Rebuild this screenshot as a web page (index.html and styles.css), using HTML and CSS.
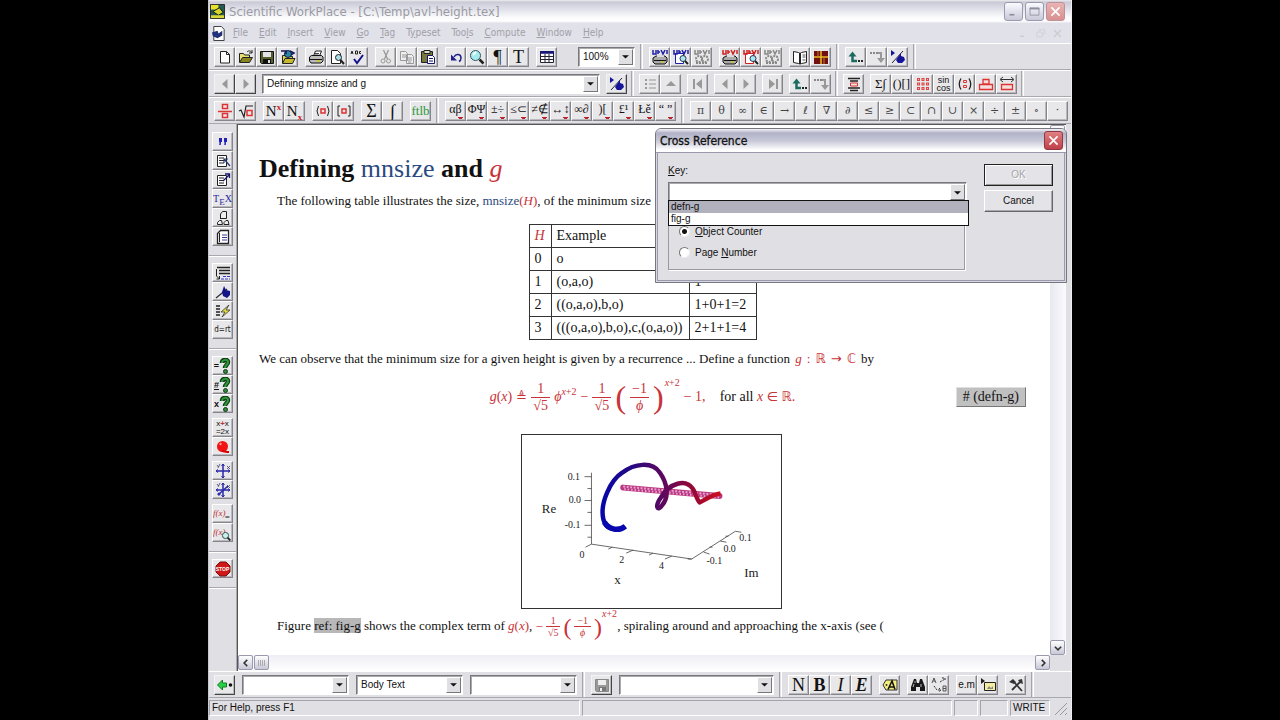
FILE: index.html
```html
<!DOCTYPE html>
<html lang="en">
<head>
<meta charset="utf-8">
<title>Scientific WorkPlace</title>
<link rel="stylesheet" href="styles.css">
</head>
<body>
<svg class="defs" aria-hidden="true">
  <defs>
    <symbol id="new" viewBox="0 0 16 16"><path d="M3.5 2.500h6l3 3v8.500h-9z" fill="#fff" stroke="#222"/><path d="M9.500 2.500v3h3" fill="none" stroke="#222"/></symbol>
    <symbol id="open" viewBox="0 0 16 16"><path d="M1.500 13V4.500h4l1 1.500h5v2" fill="#e8e070" stroke="#222"/><path d="M1.500 13.500l3-5h10l-3 5z" fill="#8a8420" stroke="#222"/><path d="M9 3c2-2 4-1 5 1m0-3v3h-3" fill="none" stroke="#222"/></symbol>
    <symbol id="save" viewBox="0 0 16 16"><path d="M1.500 2.500h13v12h-12l-1-1z" fill="#56602a" stroke="#111"/><path d="M4 3h8v5H4z" fill="#e4e4e8"/><path d="M4 10h8v4H4z" fill="#111"/><path d="M9 11h2v3H9z" fill="#ddd"/></symbol>
    <symbol id="savegray" viewBox="0 0 16 16"><path d="M1.500 2.500h13v12h-12l-1-1z" fill="#999" stroke="#888"/><path d="M4 3h8v5H4z" fill="#eee"/><path d="M5 10h7v4H5z" fill="#777"/><path d="M6 11h2v3H6z" fill="#eee"/></symbol>
    <symbol id="texopen" viewBox="0 0 16 16"><path d="M2.500 14V6.500h4l1 1h5V9" fill="#e8d840" stroke="#222"/><path d="M2.500 14.500l2.500-5h10l-2.500 5z" fill="#c8b830" stroke="#222"/><circle cx="8" cy="5" r="3.500" fill="#2a8a9a" stroke="#14145a"/><path d="M1 2h5v3M10 2l4 2-3 2" fill="none" stroke="#14145a" stroke-width="1.500"/></symbol>
    <symbol id="print" viewBox="0 0 16 16"><path d="M5.500 7l2-5h6l-2 5" fill="#fff" stroke="#222"/><path d="M7 4.500h4M6.500 6h4" stroke="#444"/><path d="M1.500 8l2-1.500h10l1.500 1.500v4l-2 2h-10l-1.500-2z" fill="#bbb" stroke="#111"/><path d="M2 10.500h12" stroke="#111"/><path d="M9 12h3" stroke="#cc0" stroke-width="1.500"/></symbol>
    <symbol id="preview" viewBox="0 0 16 16"><path d="M2.500 1.500h6l3 3v10h-9z" fill="#fff" stroke="#222"/><circle cx="9.500" cy="8.500" r="3" fill="#a8e0e8" stroke="#222"/><path d="M11.500 11l3.500 4" stroke="#222" stroke-width="2"/></symbol>
    <symbol id="check" viewBox="0 0 16 16"><path d="M1 5l1-3 1 3M5.500 5V2h2v3zM11 2.500H9.500v2H11" fill="none" stroke="#222"/><path d="M4 10l3 4 6-8" fill="none" stroke="#15158a" stroke-width="2"/></symbol>
    <symbol id="cut" viewBox="0 0 16 16"><path d="M5.500 1l4 9M10.500 1l-4 9" stroke="#999" stroke-width="1.300"/><circle cx="5" cy="12" r="2" fill="none" stroke="#999"/><circle cx="10.500" cy="12" r="2" fill="none" stroke="#999"/></symbol>
    <symbol id="copy" viewBox="0 0 16 16"><path d="M1.500 2.500h5l2 2v7h-7zM7.500 5.500h5l2 2v7h-7z" fill="#eee" stroke="#999"/><path d="M3 6h4M3 8h4M9 9h4M9 11h4M9 13h3" stroke="#999"/></symbol>
    <symbol id="paste" viewBox="0 0 16 16"><path d="M1.500 2.500h11v11h-11z" fill="#77783c" stroke="#222"/><path d="M4 1.500h6v3H4z" fill="#ddc" stroke="#222"/><path d="M7.500 6.500h5l2 2v6h-7z" fill="#fff" stroke="#15156a"/><path d="M9 9.500h4M9 12h4" stroke="#15156a"/></symbol>
    <symbol id="undo" viewBox="0 0 16 16"><path d="M6 8c2-4 7-3 7 1 0 2-1 3-2 3.500" fill="none" stroke="#20208a" stroke-width="1.500"/><path d="M3 5.500v6h6z" fill="#20208a"/></symbol>
    <symbol id="mag" viewBox="0 0 16 16"><circle cx="6.500" cy="6.500" r="5" fill="#a6ecec" stroke="#356"/><path d="M4 6l3-3" stroke="#fff" stroke-width="2"/><path d="M10.500 10.500l4 4" stroke="#222" stroke-width="2.500"/></symbol>
    <symbol id="table" viewBox="0 0 16 16"><path d="M1.500 2.500h13v11h-13z" fill="#fff" stroke="#223"/><path d="M1 3.500h14" stroke="#15157a" stroke-width="2.500"/><path d="M2 7.500h12M2 10.500h12M6 5v9M10 5v9" stroke="#223"/></symbol>
    <symbol id="dvi" viewBox="0 0 16 16"><path d="M1 1v4h3V1M6 1v4M9 1l2 4 2-4M15 1v4M6 3h2" fill="none" stroke="currentColor" stroke-width="1.500"/></symbol>
    <symbol id="dviprint" viewBox="0 0 16 16"><path d="M1 9l3-2h9l2 2v4l-2 2H3l-2-2z" fill="#aaa" stroke="#111"/><path d="M2 11.500h12" stroke="#111"/><path d="M9 13h3" stroke="#dd0"/><path d="M5 5h7v3H5z" fill="#ddd"/><use href="#dvi"/></symbol>
    <symbol id="dviview" viewBox="0 0 16 16"><path d="M2.500 4.500h8v10h-8z" fill="#fff" stroke="currentColor"/><circle cx="10" cy="9.500" r="3" fill="#a8e8ee" stroke="#335"/><path d="M12 12l3 3" stroke="#222" stroke-width="2"/><use href="#dvi"/></symbol>
    <symbol id="dvigear" viewBox="0 0 16 16"><circle cx="5" cy="10" r="3" fill="none" stroke="#888" stroke-width="2" stroke-dasharray="2 1"/><circle cx="11" cy="10" r="3" fill="none" stroke="#888" stroke-width="2" stroke-dasharray="2 1"/><path d="M2 14h12" stroke="#888" stroke-width="2" stroke-dasharray="2 1"/><use href="#dvi"/></symbol>
    <symbol id="book" viewBox="0 0 16 16"><path d="M1.500 2.500l5 1 1.500 1 1.500-1 5-1v11l-5 1L8 15l-1.500-.5-5-1z" fill="#fff" stroke="#222"/><path d="M8 4v11" stroke="#222" stroke-width="2"/><path d="M10.500 6h3M10.500 8h3M10.500 11h3" stroke="#555"/></symbol>
    <symbol id="window" viewBox="0 0 16 16"><path d="M1 2h14v13H1z" fill="#701010"/><path d="M8 2v13M1 8h14" stroke="#e8c020" stroke-width="1.500"/><path d="M5 2v6M11 8v7" stroke="#c08020"/></symbol>
    <symbol id="back" viewBox="0 0 16 16"><path d="M4.500 5v7H9" fill="none" stroke="currentColor" stroke-width="2.500"/><path d="M.500 7.500l4-5 4 5z" fill="currentColor"/><path d="M10 12h2M13 12h2" stroke="#222" stroke-width="2"/></symbol>
    <symbol id="fwd" viewBox="0 0 16 16"><path d="M1 4h2M4 4h2M7 4h2" stroke="#888" stroke-width="2"/><path d="M9 4h3v6" fill="none" stroke="#999" stroke-width="2"/><path d="M8 9h8l-4 5z" fill="#999"/></symbol>
    <symbol id="marker" viewBox="0 0 16 16"><path d="M1 1v6l4-3z" fill="#15159a"/><path d="M2 14l11-12" stroke="#223"/><path d="M11 4v3l3 1 1 3-3 3H8l-2-3 2-3z" fill="#15159a"/></symbol>
    <symbol id="tagtool" viewBox="0 0 16 16"><path d="M1 14l11-9" stroke="#333" stroke-width="1.300"/><path d="M9 2l2 4 4 1v4l-3 3-4-2-1-4z" fill="#15158a"/></symbol>
    <symbol id="left" viewBox="0 0 16 16"><path d="M10.500 3v10L5 8z" fill="#999"/></symbol>
    <symbol id="right" viewBox="0 0 16 16"><path d="M5.500 3v10L11 8z" fill="#999"/></symbol>
    <symbol id="up" viewBox="0 0 16 16"><path d="M3 10h10L8 5z" fill="#999"/></symbol>
    <symbol id="first" viewBox="0 0 16 16"><path d="M4 3v10" stroke="#999" stroke-width="2"/><path d="M12 3v10L6 8z" fill="#999"/></symbol>
    <symbol id="last" viewBox="0 0 16 16"><path d="M12 3v10" stroke="#999" stroke-width="2"/><path d="M4 3v10l6-5z" fill="#999"/></symbol>
    <symbol id="list" viewBox="0 0 16 16"><path d="M3 4h2M3 8h2M3 12h2" stroke="#999" stroke-width="2"/><path d="M7 4h7M7 8h7M7 12h7" stroke="#999"/></symbol>
    <symbol id="display" viewBox="0 0 16 16"><path d="M2 2.500h12M4 5h8M2 12h12M4 14.500h8" stroke="#222" stroke-width="1.300"/><path d="M4.500 7h7v3h-7z" fill="none" stroke="#d33"/></symbol>
    <symbol id="matrix" viewBox="0 0 16 16"><path d="M2 3.500h12M2 8h12M2 12.500h12" stroke="#d44" stroke-width="3" stroke-dasharray="3 1.500"/><path d="M3 3.500h10M3 8h10M3 12.500h10" stroke="#fbb" stroke-width="1" stroke-dasharray="1 3.500"/></symbol>
    <symbol id="binom" viewBox="0 0 16 16"><path d="M4 2.500q-3.500 5.500 0 11M12 2.500q3.500 5.500 0 11" fill="none" stroke="#222" stroke-width="1.300"/><path d="M6.500 4.500h3v2h-3zM6.500 9.500h3v2h-3z" fill="none" stroke="#d33"/></symbol>
    <symbol id="label" viewBox="0 0 16 16"><path d="M1.500 8.500h13v5h-13zM5 3.500h6v4.500h-6z" fill="#f4dede" stroke="#d33" stroke-width="1.300"/></symbol>
    <symbol id="decor" viewBox="0 0 16 16"><path d="M2 3.500h12M4 1L1 3.500 4 6M12 1l3 2.500L12 6" fill="none" stroke="#333"/><path d="M2.500 8.500h11v5h-11z" fill="#f4dede" stroke="#d33" stroke-width="1.300"/></symbol>
    <symbol id="frac" viewBox="0 0 16 16"><path d="M1 8.500h14" stroke="#d33" stroke-width="1.500"/><path d="M5.500 1.500h5v4h-5zM5.500 10.500h5v4h-5z" fill="none" stroke="#d33" stroke-width="1.500"/></symbol>
    <symbol id="root" viewBox="0 0 16 16"><path d="M1 8l2-1 3 7 2-11h7" fill="none" stroke="#222" stroke-width="1.200"/><path d="M9 7.500h5v5H9z" fill="none" stroke="#d33" stroke-width="1.500"/></symbol>
    <symbol id="paren" viewBox="0 0 16 16"><path d="M3.500 3q-3 5 0 10M12.500 3q3 5 0 10" fill="none" stroke="#222"/><path d="M6 6h4v4H6z" fill="none" stroke="#d33" stroke-width="1.500"/></symbol>
    <symbol id="bracket" viewBox="0 0 16 16"><path d="M4 3H2v10h2M12 3h2v10h-2" fill="none" stroke="#222"/><path d="M6 6h4v4H6z" fill="none" stroke="#d33" stroke-width="1.500"/></symbol>
    <symbol id="quote" viewBox="0 0 16 16"><path d="M5.500 5l-.5 6M10.500 5l-.5 6" stroke="#2222b8" stroke-width="1.500"/><path d="M4 4h3v4H4zM9 4h3v4H9z" fill="#2222b8"/></symbol>
    <symbol id="notein" viewBox="0 0 16 16"><path d="M2.500 2.500h9v11h-9z" fill="#fff" stroke="#222"/><path d="M4 5h5M4 7.500h5M4 10h5" stroke="#222"/><path d="M15 13L9 6m0 4V6h4" fill="none" stroke="#223a6a" stroke-width="1.200"/></symbol>
    <symbol id="noteout" viewBox="0 0 16 16"><path d="M2.500 3.500h9v10h-9z" fill="#fff" stroke="#222"/><path d="M4 6h5M4 8.500h5M4 11h5" stroke="#222"/><path d="M8 9l6-6m-4-1h4.500v4" fill="none" stroke="#15156a" stroke-width="1.300"/></symbol>
    <symbol id="tree" viewBox="0 0 16 16"><path d="M5.500 9V4l2-2.500h4v7h-6M2.500 14.500v-2l2-2h2l1 4zM9 14.500v-2l2-2h2l1 4z" fill="#eee" stroke="#222"/></symbol>
    <symbol id="doc" viewBox="0 0 16 16"><path d="M5.500 1.500h8v13h-11v-10z" fill="#fff" stroke="#222" stroke-width="1.300"/><path d="M4.500 4v9" stroke="#222"/><path d="M7 6h5M7 8.500h5M7 11h5" fill="none" stroke="#3a3a9a"/></symbol>
    <symbol id="para" viewBox="0 0 16 16"><path d="M2 2.500h13M4 5.500h11M4 8.500h11" stroke="#222" stroke-width="1.500"/><path d="M1.500 4v7l3 3m0-3v3h-3" fill="none" stroke="#222"/><path d="M8 11.500h7M6 14h9" stroke="#3535c8" stroke-dasharray="3 1"/></symbol>
    <symbol id="bolt" viewBox="0 0 16 16"><path d="M1 3h4M1 6h4M1 9h4M1 12h4" stroke="#222" stroke-width="1.300"/><path d="M14 2L6 9h4l-3 5 8-7h-4z" fill="#e8e040" stroke="#333" stroke-width=".8"/></symbol>
    <symbol id="evalq" viewBox="0 0 12 16"><path d="M3 5c0-4 6-4 6-1 0 3-3 3-3 6" fill="none" stroke="#123b18" stroke-width="4.500"/><path d="M3 5c0-4 6-4 6-1 0 3-3 3-3 6" fill="none" stroke="#2f9a3b" stroke-width="2"/><circle cx="6.500" cy="13.500" r="2" fill="#2f8a3b" stroke="#123b18"/></symbol>
    <symbol id="ball" viewBox="0 0 16 16"><circle cx="7.500" cy="7.500" r="5.500" fill="#f01414"/><path d="M7 12l5 1 2 0" stroke="#d00" stroke-width="2"/><circle cx="5.500" cy="5" r="1.200" fill="#f99"/></symbol>
    <symbol id="plot" viewBox="0 0 16 16"><path d="M8 1v14M1 8h14" stroke="#2a2aa8" stroke-width="1.500"/><path d="M6.500 3L8 1l1.500 2M13 6.500l2 1.500-2 1.500M3 6.500L1 8l2 1.500M6.500 13L8 15l1.500-2" fill="none" stroke="#2a2aa8"/><path d="M2 2l1.500 2M5 1L3 5M12 3l3 3M15 3l-3 3" stroke="#446" stroke-width=".8"/></symbol>
    <symbol id="plot3" viewBox="0 0 16 16"><use href="#plot"/><path d="M3 13L13 4" stroke="#2a2aa8" stroke-width="1.500"/><circle cx="4" cy="12" r="1.500" fill="#2a2aa8"/></symbol>
    <symbol id="lens" viewBox="0 0 16 16"><circle cx="8" cy="8" r="4.500" fill="#c8f0ec" stroke="#244" stroke-width="1.300"/><path d="M11 11l4 4" stroke="#222" stroke-width="2.500"/></symbol>
    <symbol id="stop" viewBox="0 0 16 16"><path d="M5 1h6l4 4v6l-4 4H5l-4-4V5z" fill="#d01818" stroke="#701010"/></symbol>
    <symbol id="goleft" viewBox="0 0 16 16"><path d="M.500 8l5-5v3h4v4h-4v3z" fill="#28d048" stroke="#147a28"/><circle cx="13.500" cy="8" r="1.800" fill="#111"/></symbol>
    <symbol id="binoc" viewBox="0 0 16 16"><path d="M4 2h2l1 4h2l1-4h2l3 8v4h-5v-4H6v4H1v-4z" fill="#181818"/><path d="M3 10l1-3M11 10V7M5 4v2" stroke="#bbb"/></symbol>
    <symbol id="replace" viewBox="0 0 16 16"><path d="M9 5l5-3m-3-1h3v3M3 9l3 4h4M8 11l2 2-2 2" fill="none" stroke="#333" stroke-dasharray="2 1"/><path d="M1 6l2-5 2 5M2 4h2M12 9h3v5h-3zM12 11.500h3" fill="none" stroke="#555"/></symbol>
    <symbol id="picture" viewBox="0 0 16 16"><path d="M1 1v6l4-3z" fill="#222"/><path d="M4.500 5.500h11v8h-11z" fill="#f4eca0" stroke="#222"/><path d="M7 12l2-3 2 2 2-2v3H7z" fill="#888"/></symbol>
    <symbol id="tools" viewBox="0 0 16 16"><path d="M4 13L12 5M6 5l8 9" stroke="#333" stroke-width="1.800"/><path d="M1 5l4-3 3 3-2 2zM10 3l4-1 1 5-3-1z" fill="#333"/></symbol>
    <symbol id="tag" viewBox="0 0 16 16"><path d="M1 8l3-5h11v10H4z" fill="#f4f080" stroke="#333"/><circle cx="4.500" cy="8" r="1" fill="#333"/><path d="M6 12.500L10 4l3 8.500M7.500 10h4.500" fill="none" stroke="#111" stroke-width="1.600"/></symbol>
    <symbol id="app" viewBox="0 0 16 16"><path d="M.500.500h15v15H.500z" fill="#245a50" stroke="#222"/><path d="M1 1h8v5H1z" fill="#e8e22c"/><path d="M3 8l7-4 4 5-5 3z" fill="#d6d62a" stroke="#111"/><path d="M1 12h14v3H1z" fill="#d8d838"/></symbol>
    <symbol id="docicon" viewBox="0 0 16 16"><path d="M3 .500h8l3 3v12H3z" fill="#fff" stroke="#333"/><path d="M1 7l6-2 1 3 4-3v5l-5 3-5-2z" fill="#22307a"/></symbol>
    <symbol id="drop" viewBox="0 0 16 16"><path d="M3 6h10l-5 5z" fill="#111"/></symbol>
    <symbol id="close" viewBox="0 0 16 16"><path d="M3 3l10 10M13 3L3 13" stroke="currentColor" stroke-width="2"/></symbol>
    <symbol id="min" viewBox="0 0 16 16"><path d="M3 12h6" stroke="currentColor" stroke-width="2"/></symbol>
    <symbol id="max" viewBox="0 0 16 16"><path d="M2.500 3.500h11v9h-11z" fill="none" stroke="currentColor"/><path d="M2 4.500h12" stroke="currentColor" stroke-width="2"/></symbol>
    <symbol id="restore" viewBox="0 0 16 16"><path d="M6 5V2.500h8v6h-3M2.500 6h8v7h-8z" fill="none" stroke="currentColor"/></symbol>
    <symbol id="chev" viewBox="0 0 16 16"><path d="M3 6l5 5 5-5" fill="none" stroke="#333" stroke-width="2.500"/></symbol>
  </defs>
</svg>

<div class="app">
  <header class="titlebar">
    <svg class="ico"><use href="#app"/></svg>
    <h1 class="app-title">Scientific WorkPlace - [C:\Temp\avl-height.tex]</h1>
    <div class="win-buttons">
      <button class="win" aria-label="Minimize"><svg><use href="#min"/></svg></button>
      <button class="win" aria-label="Maximize"><svg><use href="#max"/></svg></button>
      <button class="win win-close" aria-label="Close"><svg><use href="#close"/></svg></button>
    </div>
  </header>

  <nav class="menubar">
    <svg class="ico"><use href="#docicon"/></svg>
    <div class="menus">
      <button><u>F</u>ile</button><button><u>E</u>dit</button><button><u>I</u>nsert</button><button><u>V</u>iew</button><button><u>G</u>o</button><button><u>T</u>ag</button><button>T<u>y</u>peset</button><button>Too<u>l</u>s</button><button><u>C</u>ompute</button><button><u>W</u>indow</button><button><u>H</u>elp</button>
    </div>
    <div class="child-buttons">
      <button aria-label="Minimize document"><svg><use href="#min"/></svg></button>
      <button aria-label="Restore document"><svg><use href="#restore"/></svg></button>
      <button aria-label="Close document"><svg><use href="#close"/></svg></button>
    </div>
  </nav>

  <div class="toolbar">
    <div class="group">
      <button class="tb" aria-label="New"><svg><use href="#new"/></svg></button><button class="tb" aria-label="Open"><svg><use href="#open"/></svg></button><button class="tb" aria-label="Save"><svg><use href="#save"/></svg></button><button class="tb" aria-label="Open location"><svg><use href="#texopen"/></svg></button>
    </div>
    <div class="group">
      <button class="tb" aria-label="Print"><svg><use href="#print"/></svg></button><button class="tb" aria-label="Preview"><svg><use href="#preview"/></svg></button><button class="tb" aria-label="Spelling"><svg><use href="#check"/></svg></button>
    </div>
    <div class="group">
      <button class="tb" aria-label="Cut"><svg><use href="#cut"/></svg></button><button class="tb" aria-label="Copy"><svg><use href="#copy"/></svg></button><button class="tb" aria-label="Paste"><svg><use href="#paste"/></svg></button>
    </div>
    <div class="group">
      <button class="tb" aria-label="Undo"><svg><use href="#undo"/></svg></button><button class="tb" aria-label="Zoom"><svg><use href="#mag"/></svg></button><button class="tb glyph">¶</button><button class="tb glyph">T</button>
    </div>
    <div class="group"><button class="tb" aria-label="Table"><svg><use href="#table"/></svg></button></div>
    <span class="combo combo-zoom"><select aria-label="Zoom level"><option>100%</option></select><span class="arrow"><svg><use href="#drop"/></svg></span></span>
    <span class="sep"></span>
    <div class="group blue">
      <button class="tb" aria-label="Typeset print"><svg><use href="#dviprint"/></svg></button><button class="tb" aria-label="Typeset preview"><svg><use href="#dviview"/></svg></button><button class="tb gray" aria-label="Typeset compile"><svg><use href="#dvigear"/></svg></button>
    </div>
    <div class="group red">
      <button class="tb" aria-label="PDF print"><svg><use href="#dviprint"/></svg></button><button class="tb" aria-label="PDF preview"><svg><use href="#dviview"/></svg></button><button class="tb gray" aria-label="PDF compile"><svg><use href="#dvigear"/></svg></button>
    </div>
    <div class="group">
      <button class="tb" aria-label="Bibliography"><svg><use href="#book"/></svg></button><button class="tb" aria-label="Windows"><svg><use href="#window"/></svg></button>
    </div>
    <span class="sep"></span>
    <div class="group teal">
      <button class="tb" aria-label="History back"><svg><use href="#back"/></svg></button><button class="tb" aria-label="History forward"><svg><use href="#fwd"/></svg></button><button class="tb" aria-label="Marker"><svg><use href="#marker"/></svg></button>
    </div>
    <span class="sep"></span>
  </div>

  <div class="toolbar tight">
    <div class="group">
      <button class="tb flat" aria-label="Previous section"><svg><use href="#left"/></svg></button><button class="tb flat" aria-label="Next section"><svg><use href="#right"/></svg></button>
    </div>
    <span class="combo combo-nav"><select aria-label="Section"><option>Defining mnsize and g</option></select><span class="arrow"><svg><use href="#drop"/></svg></span></span>
    <div class="group"><button class="tb flat" aria-label="Go to marker"><svg><use href="#marker"/></svg></button></div>
    <span class="sep"></span>
    <div class="group"><button class="tb" aria-label="Contents"><svg><use href="#list"/></svg></button><button class="tb" aria-label="Up"><svg><use href="#up"/></svg></button></div>
    <div class="group"><button class="tb" aria-label="First"><svg><use href="#first"/></svg></button></div>
    <div class="group"><button class="tb" aria-label="Previous"><svg><use href="#left"/></svg></button><button class="tb" aria-label="Next"><svg><use href="#right"/></svg></button></div>
    <div class="group"><button class="tb" aria-label="Last"><svg><use href="#last"/></svg></button></div>
    <div class="group teal"><button class="tb" aria-label="Link back"><svg><use href="#back"/></svg></button><button class="tb" aria-label="Link forward"><svg><use href="#fwd"/></svg></button></div>
    <span class="sep"></span>
    <div class="group"><button class="tb" aria-label="Display"><svg><use href="#display"/></svg></button></div>
    <div class="group">
      <button class="tb glyph mid">Σ∫</button><button class="tb glyph mid">()[]</button><button class="tb" aria-label="Matrix"><svg><use href="#matrix"/></svg></button><button class="tb trig">sin<br>cos</button><button class="tb" aria-label="Binomial"><svg><use href="#binom"/></svg></button><button class="tb" aria-label="Label"><svg><use href="#label"/></svg></button><button class="tb" aria-label="Decoration"><svg><use href="#decor"/></svg></button>
    </div>
    <span class="sep"></span>
  </div>

  <div class="toolbar">
    <div class="group"><button class="tb" aria-label="Fraction"><svg><use href="#frac"/></svg></button><button class="tb" aria-label="Radical"><svg><use href="#root"/></svg></button></div>
    <div class="group"><button class="tb glyph script">N<sup>x</sup></button><button class="tb glyph script">N<sub>x</sub></button></div>
    <div class="group"><button class="tb" aria-label="Parentheses"><svg><use href="#paren"/></svg></button><button class="tb" aria-label="Brackets"><svg><use href="#bracket"/></svg></button></div>
    <div class="group"><button class="tb glyph">Σ</button><button class="tb glyph">∫</button></div>
    <div class="group"><button class="tb glyph mid green">ftlb</button></div>
    <span class="sep"></span>
    <div class="group panels">
      <button class="tb glyph">αβ</button><button class="tb glyph">ΦΨ</button><button class="tb glyph">±÷</button><button class="tb glyph">≤⊂</button><button class="tb glyph">≠∉</button><button class="tb glyph">↔↕</button><button class="tb glyph">∞∂</button><button class="tb glyph">)[</button><button class="tb glyph">£¹</button><button class="tb glyph">Łě</button><button class="tb glyph">“ ”</button>
    </div>
    <span class="sep"></span>
    <div class="group symbols">
      <button class="tb">π</button><button class="tb">θ</button><button class="tb">∞</button><button class="tb">∈</button><button class="tb">→</button><button class="tb">ℓ</button><button class="tb">∇</button><button class="tb">∂</button><button class="tb">≤</button><button class="tb">≥</button><button class="tb">⊂</button><button class="tb">∩</button><button class="tb">∪</button><button class="tb">×</button><button class="tb">÷</button><button class="tb">±</button><button class="tb">∘</button><button class="tb">·</button>
    </div>
  </div>

  <div class="work">
    <aside class="side">
      <div class="stack">
        <button class="tb" aria-label="Quote"><svg><use href="#quote"/></svg></button><button class="tb" aria-label="Note"><svg><use href="#notein"/></svg></button><button class="tb" aria-label="Link"><svg><use href="#noteout"/></svg></button><button class="tb tex">T<sub>E</sub>X</button><button class="tb" aria-label="Structure"><svg><use href="#tree"/></svg></button><button class="tb" aria-label="Document"><svg><use href="#doc"/></svg></button>
      </div>
      <hr>
      <div class="stack">
        <button class="tb" aria-label="Paragraph"><svg><use href="#para"/></svg></button><button class="tb" aria-label="Marker tool"><svg><use href="#tagtool"/></svg></button><button class="tb" aria-label="Format"><svg><use href="#bolt"/></svg></button><button class="tb tiny">d=rt</button>
      </div>
      <hr>
      <div class="stack">
        <button class="tb q">=<svg><use href="#evalq"/></svg></button><button class="tb q"><u>#</u><svg><use href="#evalq"/></svg></button><button class="tb q">x<svg><use href="#evalq"/></svg></button>
      </div>
      <div class="stack"><button class="tb expand">x<b>+</b>x<br>=2x</button><button class="tb" aria-label="Simplify"><svg><use href="#ball"/></svg></button></div>
      <div class="stack"><button class="tb" aria-label="Plot 2D"><svg><use href="#plot"/></svg></button><button class="tb" aria-label="Plot 3D"><svg><use href="#plot3"/></svg></button></div>
      <div class="stack"><button class="tb fx">f(x)<b>=</b></button><button class="tb fx">f(x)<svg><use href="#lens"/></svg></button></div>
      <hr>
      <div class="stack"><button class="tb stop"><svg><use href="#stop"/></svg><span>STOP</span></button></div>
      <hr>
    </aside>

    <main class="editor">
      <article class="doc">
        <h2>Defining <span class="fn">mnsize</span> and <i class="m">g</i></h2>
        <p class="indent">The following table illustrates the size, <span class="fn">mnsize</span><span class="m">(<i>H</i>)</span>, of the minimum size</p>
        <table class="sizes">
          <colgroup><col class="col-h"><col class="col-example"><col class="col-size"></colgroup>
          <tr><td><i class="m">H</i></td><td>Example</td><td></td></tr>
          <tr><td>0</td><td>o</td><td></td></tr>
          <tr><td>1</td><td>(o,a,o)</td><td>1</td></tr>
          <tr><td>2</td><td>((o,a,o),b,o)</td><td>1+0+1=2</td></tr>
          <tr><td>3</td><td>(((o,a,o),b,o),c,(o,a,o))</td><td>2+1+1=4</td></tr>
        </table>
        <p>We can observe that the minimum size for a given height is given by a recurrence ... Define a function <span class="m map"><i>g</i><span>:</span><span class="bb">ℝ</span><span class="bb">→</span><span class="bb">ℂ</span></span> by</p>
        <div class="equation">
          <span class="math m"><span><i>g</i>(<i>x</i>)</span><span class="bb def">≜</span><span class="fr"><span>1</span><span class="rad">√<span>5</span></span></span><span><i>ϕ</i><sup><i>x</i>+2</sup></span><span>−</span><span class="fr"><span>1</span><span class="rad">√<span>5</span></span></span><span class="big">(</span><span class="fr"><span>−1</span><span><i>ϕ</i></span></span><span class="big">)</span><sup class="high"><i>x</i>+2</sup><span>− 1,</span></span>
          <span>for all <span class="m"><i>x</i> <span class="bb">∈</span> <span class="bb">ℝ</span>.</span></span>
          <button class="marker"># (defn-g)</button>
        </div>
        <figure>
          <svg viewBox="0 0 261 174" role="img" aria-label="Space curve plot">
            <defs><linearGradient id="curve" gradientUnits="userSpaceOnUse" x1="82" y1="0" x2="200" y2="0"><stop offset="0" stop-color="#0808a8"/><stop offset=".25" stop-color="#280880"/><stop offset=".5" stop-color="#5a0860"/><stop offset=".8" stop-color="#a00830"/><stop offset="1" stop-color="#cc1020"/></linearGradient></defs>
            <path d="M70 38v72l101 15 44-28 6 1" fill="none" stroke="#444" stroke-width=".8"/>
            <path d="M63 42h7M63 66h7M63 91h7M66 54h4M66 78h4M66 103h4M70 110l-6 3M91 113l-4 2M112 116l-7 3M132 119l-4 2M151 122l-7 3M171 125h-4M183 118l6 2M200 107l6 1M192 113h-3M208 102h-3" fill="none" stroke="#444" stroke-width=".8"/>
            <path d="M102 53l97 8.500" stroke="#b83882" stroke-width="6" stroke-linecap="round"/><path d="M102 52l97 8.500" stroke="#eaa0cc" stroke-width="2" stroke-dasharray="2 1.500"/><path d="M103 54.500l97 8.500" stroke="#eaa0cc" stroke-width="2" stroke-dasharray="1.500 2"/>
            <path d="M104 92C98 97 85 97 82 85C78 68 90 45 101 38C113 29 131 26 139 38C146 48 149 62 141 71C136 78 134 71 140 63C149 48 165 44 172 54C175 58 176 65 179 68C184 66 191 60 200 59" fill="none" stroke="url(#curve)" stroke-width="4.500" stroke-linejoin="round"/>
            <path d="M104 92C98 97 88 96 83 88" fill="none" stroke="#0808b0" stroke-width="5.500"/>
            <g class="ticks"><text x="46" y="45">0.1</text><text x="47" y="69">0.0</text><text x="43" y="94">-0.1</text><text x="58" y="124">0</text><text x="98" y="129">2</text><text x="138" y="135">4</text><text x="186" y="130">-0.1</text><text x="203" y="118">0.0</text><text x="219" y="107">0.1</text></g>
            <g class="names"><text x="20" y="79">Re</text><text x="93" y="150">x</text><text x="224" y="143">Im</text></g>
          </svg>
        </figure>
        <p class="indent caption">Figure <span class="ref">ref: fig-g</span> shows the complex term of <span class="m"><i>g</i>(<i>x</i>)</span>, <span class="math small m"><span>−</span><span class="fr"><span>1</span><span class="rad">√<span>5</span></span></span><span class="big">(</span><span class="fr"><span>−1</span><span><i>ϕ</i></span></span><span class="big">)</span><sup class="high"><i>x</i>+2</sup></span>, spiraling around and approaching the x-axis (see (</p>
      </article>
      <div class="vscroll"><button class="sb" aria-label="Scroll up"><svg class="flip"><use href="#chev"/></svg></button><button class="sb" aria-label="Scroll down"><svg><use href="#chev"/></svg></button></div>
      <div class="hscroll"><button class="sb" aria-label="Scroll left"><svg class="cw"><use href="#chev"/></svg></button><span class="thumb"></span><button class="sb end" aria-label="Scroll right"><svg class="ccw"><use href="#chev"/></svg></button></div>
    </main>
  </div>

  <div class="toolbar">
    <div class="group"><button class="tb flat" aria-label="Remove item tag"><svg><use href="#goleft"/></svg></button></div>
    <span class="combo combo-tag"><select aria-label="Item tag"><option></option></select><span class="arrow"><svg><use href="#drop"/></svg></span></span>
    <span class="combo combo-tag"><select aria-label="Section tag"><option>Body Text</option></select><span class="arrow"><svg><use href="#drop"/></svg></span></span>
    <span class="combo combo-tag"><select aria-label="Text tag"><option></option></select><span class="arrow"><svg><use href="#drop"/></svg></span></span>
    <span class="sep"></span>
    <div class="group"><button class="tb flat" aria-label="Save fragment"><svg><use href="#savegray"/></svg></button></div>
    <span class="combo combo-frag"><select aria-label="Fragment"><option></option></select><span class="arrow"><svg><use href="#drop"/></svg></span></span>
    <span class="sep"></span>
    <div class="group"><button class="tb glyph style">N</button><button class="tb glyph style"><b>B</b></button><button class="tb glyph style"><i>I</i></button><button class="tb glyph style"><b><i>E</i></b></button></div>
    <div class="group"><button class="tb" aria-label="Tag appearance"><svg><use href="#tag"/></svg></button></div>
    <div class="group"><button class="tb" aria-label="Find"><svg><use href="#binoc"/></svg></button><button class="tb" aria-label="Replace"><svg><use href="#replace"/></svg></button></div>
    <div class="group"><button class="tb">e.m</button><button class="tb" aria-label="Picture"><svg><use href="#picture"/></svg></button></div>
    <div class="group"><button class="tb" aria-label="Customize"><svg><use href="#tools"/></svg></button></div>
    <span class="sep"></span>
  </div>

  <footer class="status">
    <span>For Help, press F1</span><span></span><span></span><span></span><span>WRITE</span>
    <svg class="grip" viewBox="0 0 16 16"><path d="M3 15L15 3M8 15l7-7M13 15l2-2" stroke="#999"/></svg>
  </footer>

  <section class="dialog" role="dialog" aria-labelledby="dlg-title">
    <header><h3 id="dlg-title">Cross Reference</h3><button class="win win-close hot" aria-label="Close dialog"><svg><use href="#close"/></svg></button></header>
    <form class="dlg-body">
      <div class="fields">
        <label for="key"><u>K</u>ey:</label>
        <div class="keybox">
          <span class="combo"><select id="key"><option></option></select><span class="arrow"><svg><use href="#drop"/></svg></span></span>
          <ul class="list" role="listbox" aria-label="Keys"><li role="option" aria-selected="true">defn-g</li><li role="option">fig-g</li></ul>
        </div>
        <fieldset>
          <label><input type="radio" name="kind" checked><span><u>O</u>bject Counter</span></label>
          <label><input type="radio" name="kind"><span>Page <u>N</u>umber</span></label>
        </fieldset>
      </div>
      <div class="actions"><button type="button" class="push default" disabled>OK</button><button type="button" class="push">Cancel</button></div>
    </form>
  </section>
</div>
</body>
</html>
```
FILE: styles.css
```css
:root {
  --face: #e0dfe3;
  --light: #fff;
  --math: #c83238;
  --fn: #2a4a80;
  --ui: "Liberation Sans", Arial, sans-serif;
  --caption: "DejaVu Sans Condensed", "DejaVu Sans", sans-serif;
  --serif: "Liberation Serif", "Times New Roman", serif;
}
* { box-sizing: border-box; }
body { margin: 0; padding: 0 208px; background: #000; font: 10px/12px var(--ui); color: #111; }
button { font: inherit; color: inherit; padding: 0; margin: 0; border: 0; background: none; }
svg { display: block; }
u { text-underline-offset: 1px; }
.defs { position: absolute; width: 0; height: 0; }

.app { position: relative; display: flex; flex-direction: column; min-width: 864px; min-height: 100vh; background: var(--face); border-left: 1px solid #c8c8d0; border-right: 1px solid #eee; }

.titlebar { display: flex; align-items: center; gap: 4px; height: 23px; padding: 0 6px 0 1px; background: linear-gradient(#eee 0, #c9cad6 2px, #dcdde6 8px, #fafafc 17px, #fff 21px, #e4e4ec); }
.ico { width: 15px; height: 15px; }
.app-title { flex: 1; margin: 0; font: 13px/16px var(--caption); color: #9a9aa2; }
.win-buttons { display: flex; gap: 2px; }
.win { display: grid; place-items: center; width: 19px; height: 19px; border: 1px solid #9a9aae; border-radius: 3px; background: linear-gradient(#fafaff, #c8c8d8); color: #8e8e9c; }
.win svg { width: 13px; height: 13px; }
.win-close { background: linear-gradient(#e8b4b4, #d89090); border-color: #c09098; color: #fff; }
.win-close.hot { background: linear-gradient(#e08080, #c04048); border-color: #903848; }

.menubar { display: flex; align-items: center; gap: 7px; height: 20px; padding: 0 8px 0 2px; background: #e1e1ea; color: #a0a0a6; }
.menus { display: flex; flex: 1; gap: 11px; font: 10px/14px var(--caption); }
.child-buttons { display: flex; gap: 6px; color: #cccccf; }
.child-buttons svg { width: 11px; height: 11px; }

.toolbar { display: flex; align-items: center; gap: 7px; height: 27px; padding: 0 0 0 5px; border-top: 1px solid var(--light); border-bottom: 1px solid #a8a8ae; }
.toolbar.tight { gap: 6px; }
.group { display: flex; }
.tb { display: grid; place-items: center; width: 21px; height: 20px; border: 1px solid; border-color: #fff #85858b #85858b #fff; box-shadow: inset -1px -1px #b8b8bd; background-color: #e8e7e9; overflow: hidden; white-space: nowrap; }
.tb svg { width: 16px; height: 16px; grid-area: 1 / 1; }
.tb.flat { border-color: #f4f4f4 #444 #444 #f4f4f4; }
.glyph { font: 18px/18px var(--serif); }
.glyph.mid { display: block; font-size: 13px; text-align: center; }
.glyph.script { display: block; font-size: 15px; }
.script sup, .script sub { font: bold 9px/9px var(--serif); color: #d02028; }
.glyph.style { font-size: 18px; }
.green { color: #2a9a3a; }
.tb.trig { display: block; font-size: 9px; line-height: 8px; text-align: center; }
.panels .tb { place-items: start center; font-size: 12px; line-height: 14px; background-image: linear-gradient(#c02028, #c02028), linear-gradient(#c02028, #c02028); background-position: 12px 15px, 13px 16px; background-size: 5px 1px, 3px 1px; background-repeat: no-repeat; }
.symbols .tb { font: 11px/16px "DejaVu Serif", "DejaVu Sans", serif; color: #444; }
.blue { color: #2020a8; }
.red { color: #d02020; }
.gray { color: #888; }
.teal { color: #1a6a60; }
.sep { width: 3px; height: 25px; border-left: 1px solid #a4a4aa; border-right: 1px solid #fff; margin: 0 -1px 0 -2px; }

.combo { display: flex; height: 20px; padding: 1px; background: #fff; border: 1px solid; border-color: #77777d #fff #fff #77777d; box-shadow: inset 1px 1px #aaa; }
.combo select { appearance: none; flex: 1; min-width: 0; margin: 0; padding: 0 3px; border: 0; background: none; font: 10px/14px var(--ui); color: #111; }
.arrow { display: grid; place-items: center; width: 15px; border: 1px solid; border-color: #fff #777 #777 #fff; background: var(--face); }
.arrow svg { width: 11px; height: 11px; }
.combo-zoom { width: 57px; margin-left: 14px; }
.combo-nav { width: 338px; }
.combo-tag { width: 107px; }
.combo-frag { width: 155px; }

.work { display: flex; flex: 1; }
.side { display: flex; flex-direction: column; gap: 5px; width: 28px; padding-top: 8px; border-right: 1px solid #aaa; }
.stack { display: flex; flex-direction: column; align-items: center; }
.stack .tb { width: 21px; height: 19px; }
.side hr { width: 100%; height: 2px; margin: 4px 0 1px; border: 0; border-top: 1px solid #a8a8ae; border-bottom: 1px solid #fff; }
.tb.tex { display: block; font: 10px/13px var(--serif); color: #2828a0; }
.tex sub { font-size: 9px; line-height: 6px; }
.tiny { font: 8px/12px "DejaVu Sans Condensed", sans-serif; }
.tb.q { display: flex; align-items: center; justify-content: center; gap: 0; font: bold 9px/10px var(--ui); }
.q svg { width: 12px; height: 16px; }
.tb.expand { display: block; font: 8px/8px var(--ui); text-align: center; }
.expand b, .fx { color: #c03038; }
.tb.fx { position: relative; display: block; font: italic 9px/9px var(--serif); text-align: left; }
.fx b { position: absolute; right: 2px; bottom: 0; color: #222; }
.fx svg { position: absolute; right: 1px; bottom: 0; width: 11px; height: 11px; }
.stop span { grid-area: 1 / 1; font: bold 5px/6px var(--ui); color: #fff; z-index: 1; }

.editor { display: grid; flex: 1; grid-template: 1fr 16px / 1fr 16px; margin-right: 5px; border-left: 1px solid #555; border-top: 1px solid #555; }
.doc { padding: 29px 24px 0 21px; background: #fff; font: 14px/20px var(--serif); color: #111; }
.doc p { margin: 0; font-size: 13px; white-space: nowrap; }
.doc h2 { margin: 0 0 7px; font: bold 26px/30px var(--serif); }
.doc h2 .fn, .doc h2 .m { font-weight: normal; }
.fn { color: var(--fn); }
.m { color: var(--math); }
.bb { font-family: "DejaVu Sans", sans-serif; font-size: 13px; line-height: 14px; }
.map { display: inline-flex; align-items: baseline; gap: 5px; padding: 0 2px; }
.doc .indent { padding-left: 18px; }
.sizes { table-layout: fixed; width: 228px; margin: 13px auto 9px; border-collapse: collapse; }
.col-h { width: 22px; }
.col-example { width: 138px; }
.sizes td { height: 23px; padding: 0 5px; border: 1px solid #333; line-height: 20px; white-space: nowrap; }
.equation { display: grid; grid-template-columns: 1fr auto auto 1fr; align-items: center; column-gap: 14px; height: 40px; margin-top: 8px; }
.equation .math { grid-column: 2; }
.marker { justify-self: end; padding: 0 6px; border: 1px solid; border-color: #e0e0e0 #777 #777 #e0e0e0; background: #c0c0c0; font: 14px/18px var(--serif); }
.math { display: inline-flex; align-items: center; gap: 4px; white-space: nowrap; }
.fr { display: flex; flex-direction: column; align-items: center; line-height: 16px; }
.fr > :first-child { align-self: stretch; border-bottom: 1px solid; text-align: center; padding: 0 6px; }
.fr > .rad { padding: 0 2px; }
.rad span { border-top: 1px solid; }
.math sup { font-size: 10px; line-height: 10px; vertical-align: 6px; }
.math .high { align-self: flex-start; margin: -2px 0 0 -3px; }
.big { font-size: 32px; line-height: 34px; }
.big + .fr > :first-child { padding: 0 2px; }
figure { display: flex; justify-content: center; margin: 17px 0 0; padding-left: 18px; }
figure svg { width: 261px; border: 1px solid #333; }
.ticks { font: 10px var(--serif); fill: #222; }
.names { font: 13px var(--serif); fill: #222; }
.ref { background: #b8b8b8; }
.doc .caption { padding-top: 2px; }
.small { vertical-align: middle; gap: 3px; }
.small .fr { font-size: 10px; line-height: 11px; }
.small .fr > :first-child { padding: 0 3px; }
.small .big { font-size: 24px; line-height: 32px; }

.vscroll { display: flex; flex-direction: column; justify-content: space-between; background: linear-gradient(90deg, #e8e8f0, #fafaff); }
.hscroll { display: flex; background: linear-gradient(#eeeef4, #fff); }
.sb, .thumb { display: grid; place-items: center; width: 15px; height: 15px; border: 1px solid #9a9aae; border-radius: 2px; background: linear-gradient(#fff, #c8c8d8); }
.sb svg { width: 10px; height: 10px; }
.thumb { margin-left: 1px; background: repeating-linear-gradient(90deg, #aaa 0 1px, transparent 1px 2px) center / 7px 6px no-repeat, linear-gradient(#fff, #c8c8d8); }
.end { margin-left: auto; }
.flip { transform: rotate(180deg); }
.cw { transform: rotate(90deg); }
.ccw { transform: rotate(-90deg); }

.status { display: grid; grid-template-columns: 1fr 1fr 24px 28px 40px 16px; column-gap: 2px; height: 22px; padding: 2px 3px 4px 0; }
.status span { padding: 0 2px; border: 1px solid; border-color: #a4a4aa #fff #fff #a4a4aa; line-height: 14px; }
.grip { width: 16px; height: 16px; }

.dialog { position: absolute; top: 128px; right: 4px; width: 412px; background: var(--face); border: 1px solid #77777f; border-radius: 6px 6px 0 0; box-shadow: inset 0 0 0 1px #d8d8e4, inset 0 0 0 2px #9a9aac; }
.dialog header { display: flex; align-items: center; justify-content: space-between; height: 24px; padding: 0 3px 0 4px; border-radius: 5px 5px 0 0; background: linear-gradient(#f4f4f8, #b0b1c6 4px, #c8c9d8 12px, #fff 21px); border-bottom: 1px solid #9a9aac; }
.dialog h3 { margin: 0; font: 12px/16px var(--caption); color: #111; -webkit-text-stroke: .3px #111; }
.dlg-body { display: flex; justify-content: space-between; padding: 11px 13px 12px 12px; }
.fields { width: 299px; }
.fields > label { display: block; height: 18px; line-height: 14px; }
.keybox { position: relative; }
.list { position: absolute; top: 18px; left: 0; right: -2px; margin: 0; padding: 0; border: 1px solid #111; background: #fff; list-style: none; z-index: 1; }
.list li { padding-left: 2px; line-height: 12px; }
.list [aria-selected] { background: #b1b0bd; }
fieldset { display: flex; flex-direction: column; gap: 8px; margin: 10px 2px 0 0; padding: 12px 10px 10px; border: 1px solid #9a9aa0; box-shadow: 1px 1px #fff; }
fieldset label { display: flex; align-items: center; gap: 5px; height: 13px; }
fieldset input { appearance: none; width: 11px; height: 11px; margin: 0; border: 1px solid; border-color: #777 #eee #eee #777; border-radius: 50%; background: #fff; }
fieldset input:checked { background: radial-gradient(#111 0 1px, #111 2px, #fff 3px); }
.actions { display: flex; flex-direction: column; gap: 4px; width: 69px; }
.push { height: 22px; border: 1px solid; border-color: #fff #66666c #66666c #fff; box-shadow: inset -1px -1px #aaa; background: #e4e3e7; }
.push.default { border-color: #222; box-shadow: inset 1px 1px #fff, inset -1px -1px #999; }
.push:disabled { color: #a4a4aa; text-shadow: 1px 1px #fff; }
```
